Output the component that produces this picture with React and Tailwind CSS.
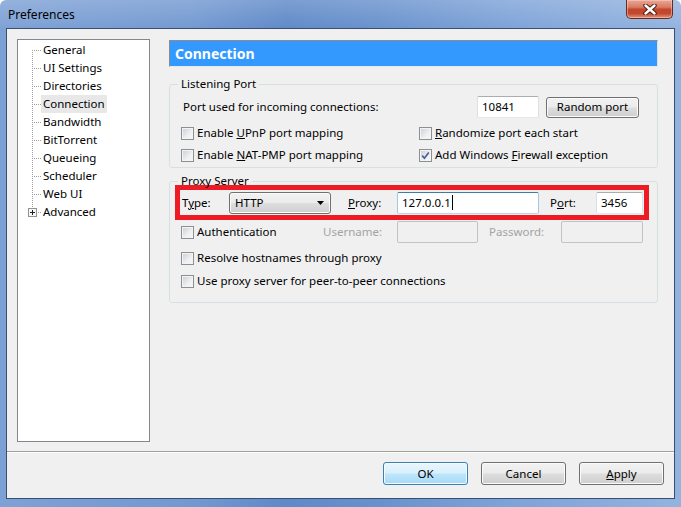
import React from 'react'

const buttonBase =
  'flex items-center justify-center rounded-[3px] border text-black'
const grayButton =
  'border-[#707070] bg-[linear-gradient(#f2f2f2,#ebebeb_48%,#dddddd_52%,#cfcfcf)] shadow-[inset_0_0_0_1px_#fbfbfb]'
const defaultButton =
  'border-[#3c7fb1] bg-[linear-gradient(#eaf6fd,#d9f0fc_48%,#bee6fd_52%,#a7d9f5)] shadow-[inset_0_0_0_1px_#f2fbff]'

const pages = [
  'General',
  'UI Settings',
  'Directories',
  'Connection',
  'Bandwidth',
  'BitTorrent',
  'Queueing',
  'Scheduler',
  'Web UI',
  'Advanced',
]

function Box({ checked }) {
  return (
    <span className="flex h-[13px] w-[13px] shrink-0 items-center justify-center border border-[#8e8f8f] bg-[linear-gradient(135deg,#c9cdd2,#eef0f2_60%,#f8f8f8)] shadow-[inset_0_0_0_1px_#f4f4f4]">
      {checked && (
        <svg width="9" height="9" viewBox="0 0 9 9">
          <path d="M1.2 4.6 L3.4 7.2 L7.8 1.4" fill="none" stroke="#4a5f97" strokeWidth="1.7" />
        </svg>
      )}
    </span>
  )
}

function Check({ checked, children, className = '' }) {
  return (
    <label className={`flex items-center gap-[3px] ${className}`}>
      <Box checked={checked} />
      <span className="whitespace-nowrap">{children}</span>
    </label>
  )
}

function Field({ value, width, focused, disabled }) {
  let border = 'border-[#abadb3] border-x-[#dbdfe6] border-b-[#e3e9ef] bg-white'
  if (focused) border = 'border-[#3d7bad] border-x-[#a4c9e3] border-b-[#b7d9ed] bg-white'
  if (disabled) border = 'border-[#c0c3c7] bg-[#f0f0f0]'
  return (
    <div className={`flex h-[22px] shrink-0 items-center rounded-[2px] border pl-[4px] ${border} ${width}`}>
      {value}
      {focused && <span className="ml-px h-[15px] w-px bg-black" />}
    </div>
  )
}

function Group({ title, className = '', children }) {
  return (
    <fieldset className={`rounded-[3px] border border-[#d5dfe5] ${className}`}>
      <legend className="ml-[8px] px-[3px] leading-[12px]">{title}</legend>
      {children}
    </fieldset>
  )
}

// dotted branch lines of the page tree, with the expander box on the last row
function TreeLines() {
  const rows = pages.length
  return (
    <svg width="23" height={rows * 18} className="shrink-0" shapeRendering="crispEdges">
      <line x1="14.5" y1="9" x2="14.5" y2="167" stroke="#a0a0a0" strokeDasharray="1 1" />
      {pages.slice(0, rows - 1).map((p, i) => (
        <line key={p} x1="16" y1={9.5 + i * 18} x2="23" y2={9.5 + i * 18} stroke="#a0a0a0" strokeDasharray="1 1" />
      ))}
      <line x1="20" y1="171.5" x2="23" y2="171.5" stroke="#a0a0a0" strokeDasharray="1 1" />
      <rect x="10.5" y="167.5" width="8" height="8" fill="#f7f7f7" stroke="#919191" />
      <line x1="12" y1="171.5" x2="17" y2="171.5" stroke="#1f1f1f" />
      <line x1="14.5" y1="169" x2="14.5" y2="174" stroke="#1f1f1f" />
    </svg>
  )
}

function CloseButton() {
  return (
    <button className="mr-[8px] flex h-[19px] w-[47px] items-center justify-center self-start rounded-b-[5px] border border-t-0 border-[#6b2a20] bg-[linear-gradient(#eaa896,#d87a64_40%,#c5452b_52%,#c2492f_75%,#e2937c)] shadow-[inset_0_0_0_1px_rgba(255,220,210,0.45)]">
      <svg width="14" height="11" viewBox="0 0 14 11">
        <path d="M2.5 1.5 L11.5 9.5 M11.5 1.5 L2.5 9.5" stroke="#4a1c14" strokeWidth="4.4" strokeLinecap="round" />
        <path d="M2.5 1.5 L11.5 9.5 M11.5 1.5 L2.5 9.5" stroke="#ffffff" strokeWidth="2.4" strokeLinecap="round" />
      </svg>
    </button>
  )
}

export default function App() {
  return (
    <div className="flex h-[507px] w-[681px] flex-col overflow-hidden rounded-t-[6px] bg-[linear-gradient(180deg,rgba(255,255,255,0.18),rgba(255,255,255,0)_30px),linear-gradient(90deg,#7ea1d5_0%,#7399d1_28%,#5f89c8_42%,#6891cc_55%,#7ea3d8_75%,#93b3df_100%)] font-['Noto_Sans',sans-serif] text-[11.5px] text-black">
      {/* title bar */}
      <div className="flex h-[28px] shrink-0 justify-between">
        <span className="pl-[8px] pt-[7px] text-[12px] leading-[16px]">Preferences</span>
        <CloseButton />
      </div>

      {/* client area */}
      <div className="mx-[6px] flex h-[471px] flex-col border border-[#3a4f70] bg-[#f0f0f0]">
        <div className="flex h-[413px] gap-[19px] px-[10px] pt-[10px]">
          {/* page list */}
          <div className="h-[403px] w-[133px] shrink-0 border border-[#828790] bg-white pt-px">
            <div className="flex">
              <TreeLines />
              <div className="flex flex-col">
                {pages.map((p) => (
                  <div key={p} className="flex h-[18px] items-center">
                    <span
                      className={`flex h-[18px] items-center px-[2px] ${p === 'Connection' ? 'bg-[#e8e8e8]' : ''}`}
                    >
                      {p}
                    </span>
                  </div>
                ))}
              </div>
            </div>
          </div>

          {/* settings pane */}
          <div className="mt-px flex w-[489px] flex-col">
            <div className="flex h-[27px] items-center border border-[#8c8c8c] border-b-[#e8e8e8] border-r-[#e0e0e0] bg-[#3399ff] pl-[5px] text-[14px] font-bold text-white">
              Connection
            </div>

            <Group title="Listening Port" className="mt-[11px]">
              <div className="mt-[6px] flex h-[22px] items-center">
                <span className="ml-[13px] w-[294px] shrink-0">Port used for incoming connections:</span>
                <Field value="10841" width="w-[62px]" />
                <button className={`${buttonBase} ${grayButton} ml-[7px] h-[21px] w-[93px]`}>Random port</button>
              </div>
              <div className="mt-[4px] flex h-[22px] items-center pl-[11px]">
                <Check className="w-[238px]">
                  Enable <u>U</u>PnP port mapping
                </Check>
                <Check>
                  <u>R</u>andomize port each start
                </Check>
              </div>
              <div className="mb-px flex h-[22px] items-center pl-[11px]">
                <Check className="w-[238px]">
                  Enable <u>N</u>AT-PMP port mapping
                </Check>
                <Check checked>
                  Add Windows <u>F</u>irewall exception
                </Check>
              </div>
            </Group>

            <Group title="Proxy Server" className="mt-[7px]">
              <div className="-mt-[2px] ml-[5px] flex h-[35px] w-[474px] items-center border-[5px] border-[#ed1c24]">
                <span className="w-[49px] shrink-0 pl-[2px]">
                  T<u>y</u>pe:
                </span>
                <div className={`flex h-[22px] w-[102px] shrink-0 items-center justify-between rounded-[3px] border px-[5px] ${grayButton}`}>
                  <span>HTTP</span>
                  <svg width="7" height="4" viewBox="0 0 7 4" className="mr-[1px]">
                    <path d="M0 0 H7 L3.5 4 Z" fill="#000" />
                  </svg>
                </div>
                <span className="ml-[17px] w-[49px] shrink-0">
                  <u>P</u>roxy:
                </span>
                <Field value="127.0.0.1" width="w-[142px]" focused />
                <span className="ml-[11px] w-[46px] shrink-0">
                  P<u>o</u>rt:
                </span>
                <Field value="3456" width="w-[47px]" />
              </div>

              <div className="mt-px flex h-[22px] items-center pl-[11px]">
                <Check className="w-[142px] shrink-0">Authentication</Check>
                <span className="w-[74px] shrink-0 text-[#a3a3a3]">Username:</span>
                <Field width="w-[81px]" disabled />
                <span className="ml-[11px] w-[72px] shrink-0 text-[#a3a3a3]">Password:</span>
                <Field width="w-[82px]" disabled />
              </div>
              <div className="mt-[4px] flex h-[22px] items-center pl-[11px]">
                <Check>Resolve hostnames through proxy</Check>
              </div>
              <div className="mb-[10px] mt-px flex h-[22px] items-center pl-[11px]">
                <Check>Use proxy server for peer-to-peer connections</Check>
              </div>
            </Group>
          </div>
        </div>

        <div className="mt-[9px] border-t border-[#a0a0a0] shadow-[0_1px_0_#fff]" />

        <div className="mt-[10px] flex justify-end gap-[13px] pr-[10px]">
          <button className={`${buttonBase} ${defaultButton} h-[23px] w-[85px]`}>OK</button>
          <button className={`${buttonBase} ${grayButton} h-[23px] w-[85px]`}>Cancel</button>
          <button className={`${buttonBase} ${grayButton} h-[23px] w-[85px]`}>
            <u>A</u>pply
          </button>
        </div>
      </div>
    </div>
  )
}
